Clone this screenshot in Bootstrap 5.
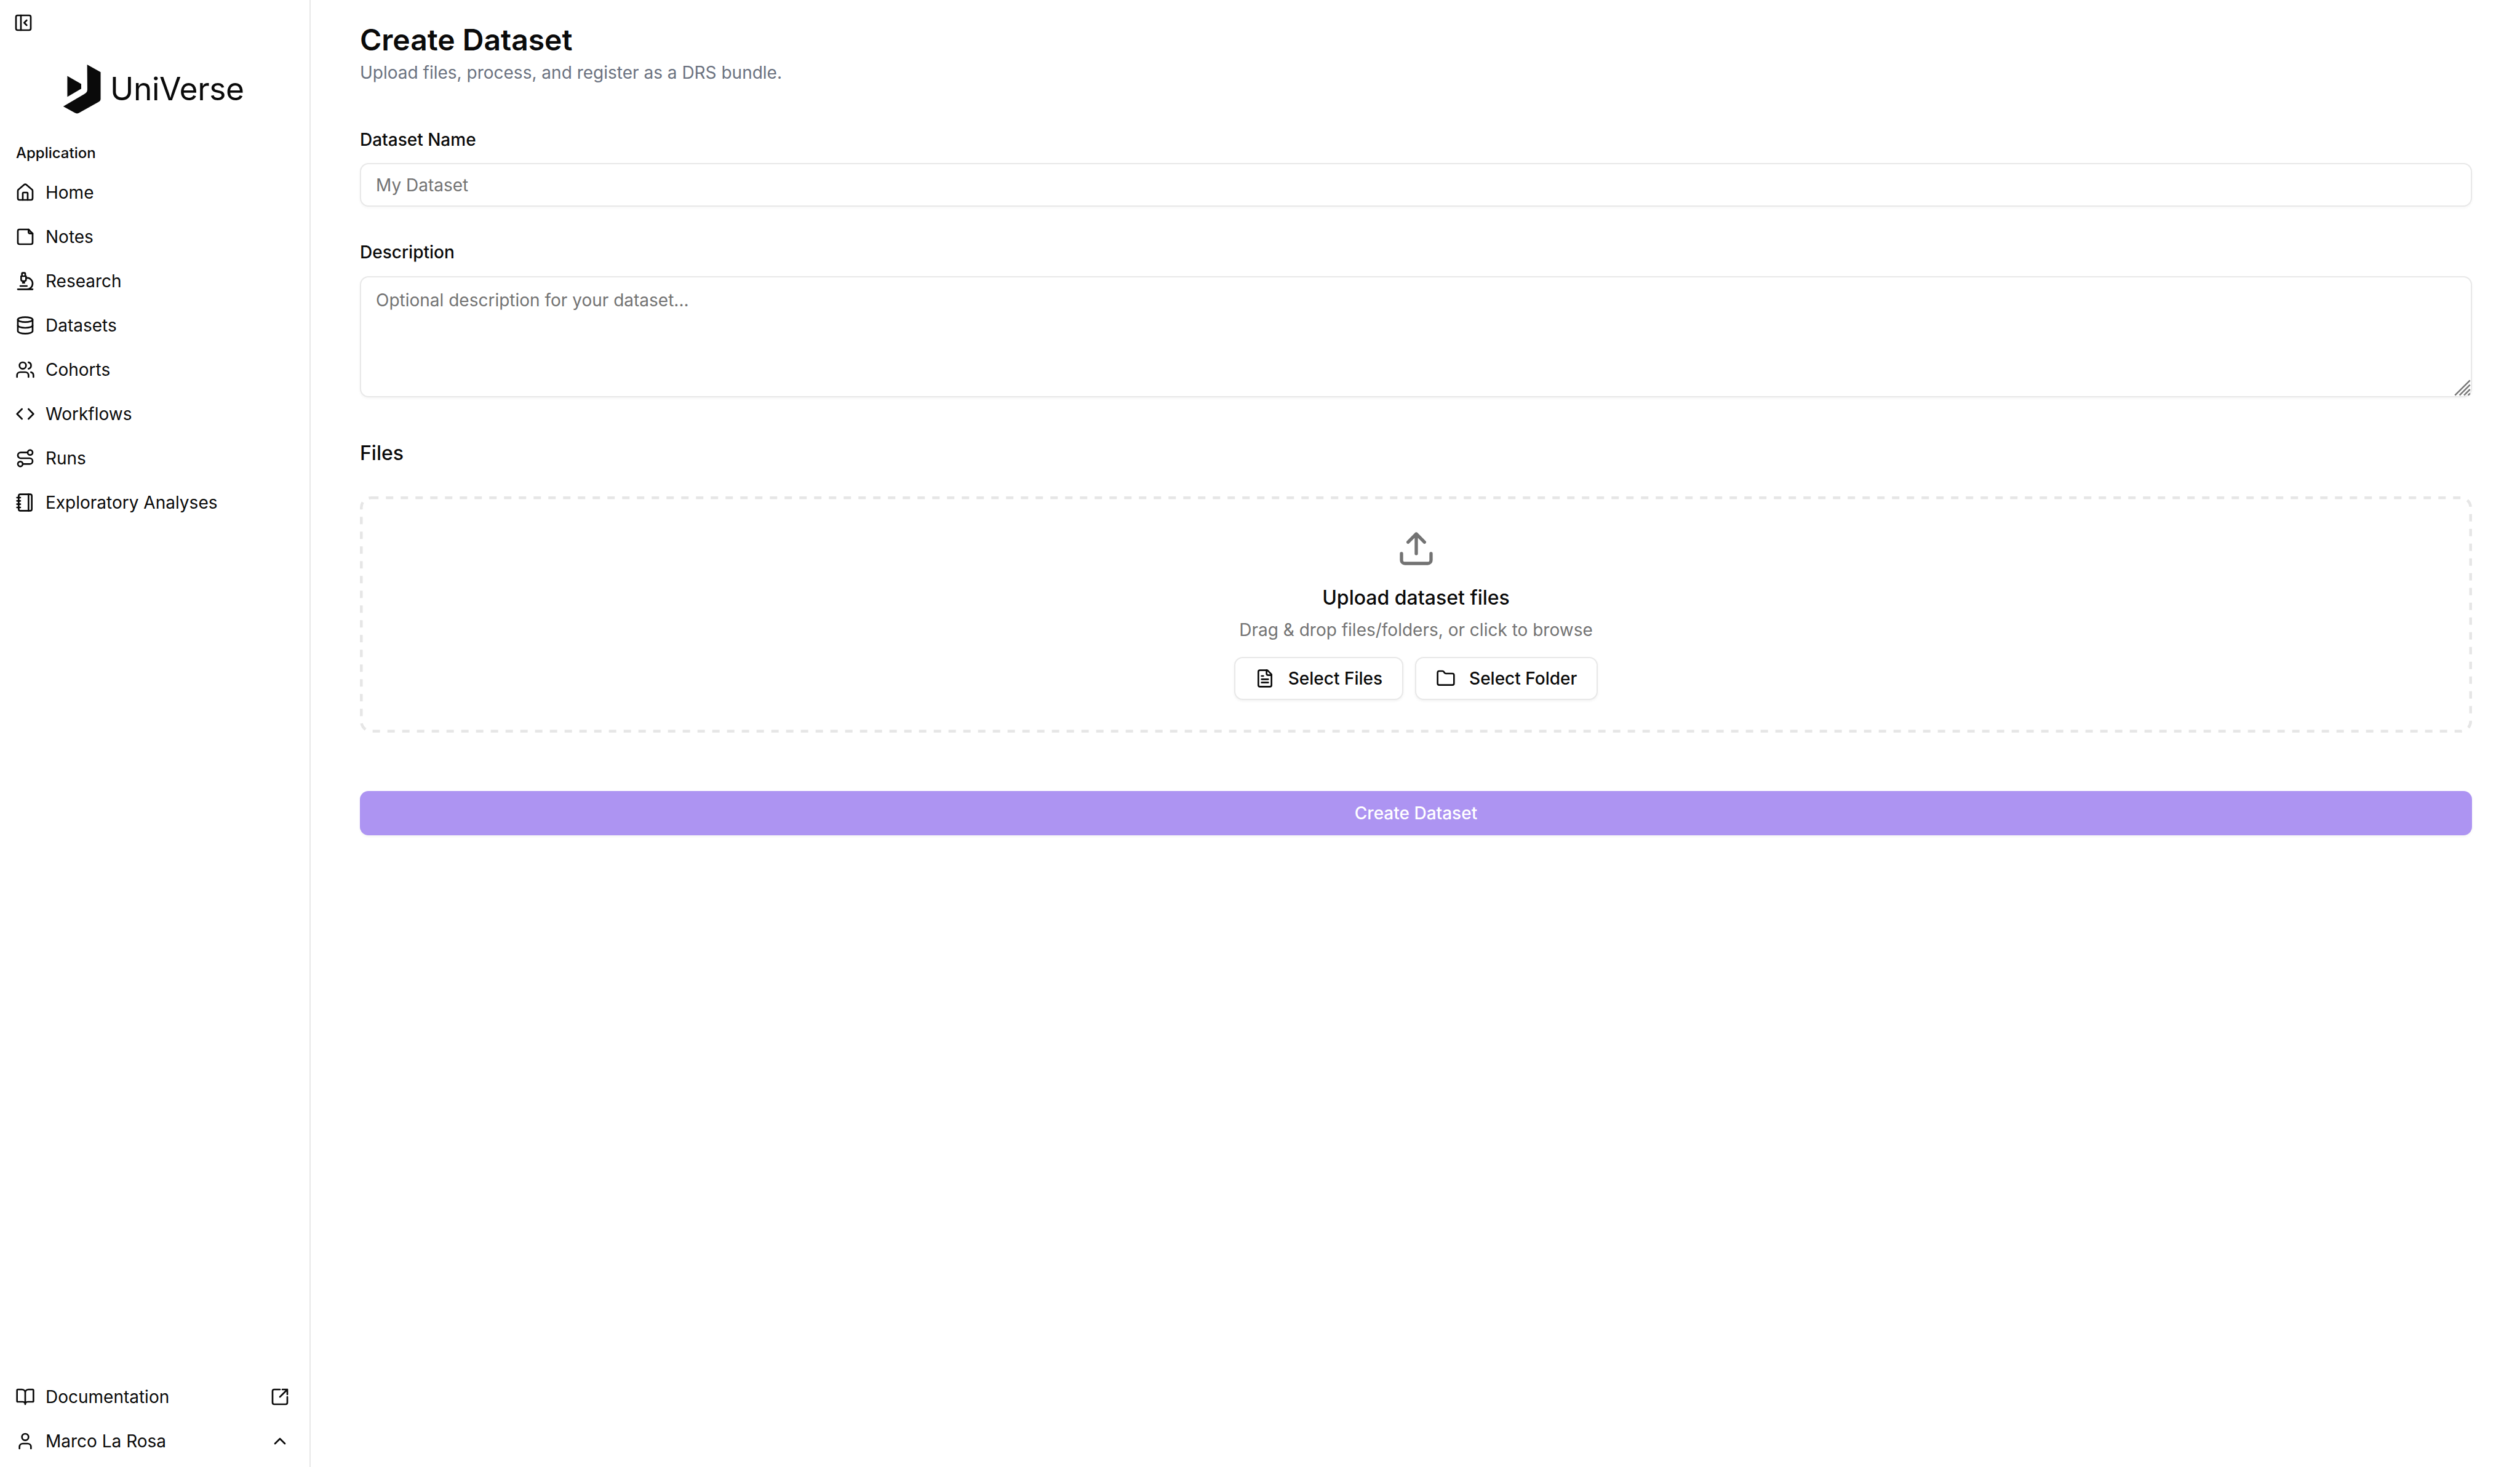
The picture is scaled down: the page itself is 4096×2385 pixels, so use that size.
<!doctype html>
<html lang="en"><head><meta charset="utf-8"><title>Create Dataset</title>
<link href="https://cdn.jsdelivr.net/npm/bootstrap@5.3.0/dist/css/bootstrap.min.css" rel="stylesheet">
<style>
html,body{height:100%;margin:0;background:#fff}
body{font-family:Inter,"Liberation Sans",sans-serif;color:#0a0a0a;font-size:28px;line-height:1.43}
.app-shell{height:2385px;overflow:hidden}
.side-rail{width:505px;flex:none;border-right:2px solid #e8e8e8;padding:0 20px 6px 20px}
.rail-toggle{width:32px;height:32px;margin:21px 0 0 2px;display:block;flex:none}
.rail-logo{margin:51px 0 0 0;height:82px;gap:14px;padding-left:81px;flex:none}
.logo-text{font-size:51.500px;letter-spacing:-.4px;font-weight:400;line-height:1}
.rail-head{font-size:24px;font-weight:500;margin-top:45px;height:36px;padding-left:6px;line-height:36px;flex:none}
.rail-nav{margin-top:10px}
.rail-link{height:72px;display:flex;align-items:center;color:#0a0a0a;text-decoration:none;gap:17px;font-size:28px;padding-left:5px}
.rail-link svg{width:32px;height:32px;flex:none}
.rail-end{margin-left:auto;margin-right:12px}
.ico{fill:none;stroke:currentColor;stroke-width:2;stroke-linecap:round;stroke-linejoin:round}
.main-pane{padding:0 78px 0 80px;min-width:0}
.page-title{font-size:48px;font-weight:600;margin:0;padding-top:34px;line-height:62px}
.page-sub{font-size:28px;color:#6b7280;line-height:40px;margin:2px 0 0}
.fld-label{font-size:28px;font-weight:500;line-height:36px;margin:0 0 20.5px;display:block}
.lbl-name{margin-top:70.5px}
.lbl-desc{margin-top:56px}
.fld-input{height:71px;border:2px solid #e8e8e8;border-radius:14px;font-size:28px;padding:0 24px;box-shadow:0 2px 4px rgba(0,0,0,.04);color:#0a0a0a}
.fld-input::placeholder{color:#737373}
textarea.fld-input{height:197px;padding:16px 24px;display:block;resize:none}
.grip-mark{position:absolute;right:0;bottom:0;width:32px;height:32px;stroke:#777;stroke-width:2.5}
.sec-head{font-size:32px;font-weight:500;line-height:40px;margin:71.5px 0 0}
.drop-zone{height:384px;border-radius:18px;padding-top:53px;margin-top:50px}
.dash-frame{fill:none;stroke:#e6e6e6;stroke-width:4.500px;stroke-dasharray:12 12}
.dash-frame rect{x:2.250px;y:2.250px;width:calc(100% - 4.500px);height:calc(100% - 4.500px);rx:16px}
.up-mark{display:block;margin:0 auto;color:#737373}
.drop-title{font-size:32px;font-weight:500;line-height:44px;margin:26px 0 0}
.drop-sub{font-size:28px;color:#737373;line-height:40px;margin:10px 0 0}
.pick-row{gap:19px;margin-top:24px}
.pick-btn{height:70px;border:2px solid #e8e8e8;border-radius:14px;background:#fff;font-size:28px;font-weight:500;display:flex;align-items:center;gap:22px;padding:0 32px;box-shadow:0 2px 4px rgba(0,0,0,.05);color:#0a0a0a}
.pick-btn svg{width:32px;height:32px}
.go-btn{height:71.500px;border:0;border-radius:14px;background:#ad94f2;color:#fff;font-size:28px;font-weight:500;width:100%;display:block;margin-top:95px;box-shadow:0 2px 4px rgba(0,0,0,.05)}
</style></head><body>
<div class="d-flex app-shell">
<aside class="side-rail d-flex flex-column">
 <svg class="rail-toggle ico" viewBox="0 0 24 24"><rect x="3" y="3" width="18" height="18" rx="2"/><path d="M9 3v18M16 15l-3-3 3-3"/></svg>
 <div class="rail-logo d-flex align-items-center">
  <svg width="64" height="82" viewBox="305 312 192 247" fill="#0a0a0a"><path d="M427 315L493 352V485Q493 492 483 498L386 552Q376 557 366 551L310 520L414 459Q428 451 428 437Z"/><path d="M330 371L398 410V433L330 473Z"/></svg>
  <span class="logo-text">UniVerse</span>
 </div>
 <div class="rail-head">Application</div>
 <nav class="rail-nav">
  <a class="rail-link" href="#"><svg class="ico" viewBox="0 0 24 24"><path d="M15 21v-8a1 1 0 0 0-1-1h-4a1 1 0 0 0-1 1v8"/><path d="M3 10a2 2 0 0 1 .7-1.500l7-6a2 2 0 0 1 2.600 0l7 6a2 2 0 0 1 .7 1.500v9a2 2 0 0 1-2 2H5a2 2 0 0 1-2-2z"/></svg>Home</a>
  <a class="rail-link" href="#"><svg class="ico" viewBox="0 0 24 24"><path d="M16 3H5a2 2 0 0 0-2 2v14a2 2 0 0 0 2 2h14a2 2 0 0 0 2-2V8Z"/><path d="M16 3v3a2 2 0 0 0 2 2h3"/></svg>Notes</a>
  <a class="rail-link" href="#"><svg class="ico" viewBox="0 0 24 24"><path d="M6 18h8M3 22h18M14 22a7 7 0 1 0 0-14h-1M9 14h2M9 12a2 2 0 0 1-2-2V6h6v4a2 2 0 0 1-2 2zM12 6V3a1 1 0 0 0-1-1H9a1 1 0 0 0-1 1v3"/></svg>Research</a>
  <a class="rail-link" href="#"><svg class="ico" viewBox="0 0 24 24"><ellipse cx="12" cy="5" rx="9" ry="3"/><path d="M3 5v14c0 1.700 4 3 9 3s9-1.300 9-3V5"/><path d="M3 12c0 1.700 4 3 9 3s9-1.300 9-3"/></svg>Datasets</a>
  <a class="rail-link" href="#"><svg class="ico" viewBox="0 0 24 24"><path d="M16 21v-2a4 4 0 0 0-4-4H6a4 4 0 0 0-4 4v2"/><circle cx="9" cy="7" r="4"/><path d="M22 21v-2a4 4 0 0 0-3-3.900M16 3.100a4 4 0 0 1 0 7.800"/></svg>Cohorts</a>
  <a class="rail-link" href="#"><svg class="ico" viewBox="0 0 24 24"><path d="M16 18l6-6-6-6M8 6l-6 6 6 6"/></svg>Workflows</a>
  <a class="rail-link" href="#"><svg class="ico" viewBox="0 0 24 24"><circle cx="6" cy="19" r="3"/><path d="M9 19h8.500a3.500 3.500 0 0 0 0-7h-11a3.500 3.500 0 0 1 0-7H15"/><circle cx="18" cy="5" r="3"/></svg>Runs</a>
  <a class="rail-link" href="#"><svg class="ico" viewBox="0 0 24 24"><path d="M2 6h4M2 10h4M2 14h4M2 18h4"/><rect x="4" y="2" width="16" height="20" rx="2"/><path d="M16 2v20"/></svg>Exploratory Analyses</a>
 </nav>
 <div class="mt-auto">
  <a class="rail-link" href="#"><svg class="ico" viewBox="0 0 24 24"><path d="M12 7v14M3 18a1 1 0 0 1-1-1V4a1 1 0 0 1 1-1h5a4 4 0 0 1 4 4 4 4 0 0 1 4-4h5a1 1 0 0 1 1 1v13a1 1 0 0 1-1 1h-6a3 3 0 0 0-3 3 3 3 0 0 0-3-3z"/></svg>Documentation<svg class="ico rail-end" viewBox="0 0 24 24"><path d="M12 3H5a2 2 0 0 0-2 2v14a2 2 0 0 0 2 2h14a2 2 0 0 0 2-2v-7"/><path d="M21 3l-9 9M15 3h6v6"/></svg></a>
  <a class="rail-link" href="#"><svg class="ico" viewBox="0 0 24 24"><path d="M19 21v-2a4 4 0 0 0-4-4H9a4 4 0 0 0-4 4v2"/><circle cx="12" cy="7" r="4"/></svg>Marco La Rosa<svg class="ico rail-end" viewBox="0 0 24 24"><path d="M18 15l-6-6-6 6"/></svg></a>
 </div>
</aside>
<main class="main-pane flex-grow-1">
 <h1 class="page-title">Create Dataset</h1>
 <p class="page-sub">Upload files, process, and register as a DRS bundle.</p>
 <label class="fld-label lbl-name">Dataset Name</label>
 <input class="form-control fld-input" placeholder="My Dataset">
 <label class="fld-label lbl-desc">Description</label>
 <div class="position-relative">
  <textarea class="form-control fld-input" placeholder="Optional description for your dataset..."></textarea>
  <svg class="grip-mark" viewBox="0 0 32 32"><path d="M4.300 28.700L28.700 4.300M11.700 28.700L28.700 11.700M19 28.700L28.700 19M25.700 28.700L28.700 25.700"/></svg>
 </div>
 <h2 class="sec-head">Files</h2>
 <div class="drop-zone position-relative text-center">
  <svg class="dash-frame position-absolute top-0 start-0 w-100 h-100"><rect/></svg>
  <svg class="ico up-mark" width="64" height="64" viewBox="0 0 24 24"><path d="M21 15v4a2 2 0 0 1-2 2H5a2 2 0 0 1-2-2v-4M17 8l-5-5-5 5M12 3v12"/></svg>
  <p class="drop-title">Upload dataset files</p>
  <p class="drop-sub">Drag &amp; drop files/folders, or click to browse</p>
  <div class="d-flex justify-content-center pick-row">
   <button class="pick-btn" type="button"><svg class="ico" viewBox="0 0 24 24"><path d="M15 2H6a2 2 0 0 0-2 2v16a2 2 0 0 0 2 2h12a2 2 0 0 0 2-2V7z"/><path d="M14 2v4a2 2 0 0 0 2 2h4M10 9H8M16 13H8M16 17H8"/></svg>Select Files</button>
   <button class="pick-btn" type="button"><svg class="ico" viewBox="0 0 24 24"><path d="M20 20a2 2 0 0 0 2-2V8a2 2 0 0 0-2-2h-7.900a2 2 0 0 1-1.700-.9l-.8-1.200A2 2 0 0 0 7.900 3H4a2 2 0 0 0-2 2v13a2 2 0 0 0 2 2z"/></svg>Select Folder</button>
  </div>
 </div>
 <button class="go-btn" type="button">Create Dataset</button>
</main>
</div>
<script src="https://cdn.jsdelivr.net/npm/bootstrap@5.3.0/dist/js/bootstrap.bundle.min.js"></script>
</body></html>
